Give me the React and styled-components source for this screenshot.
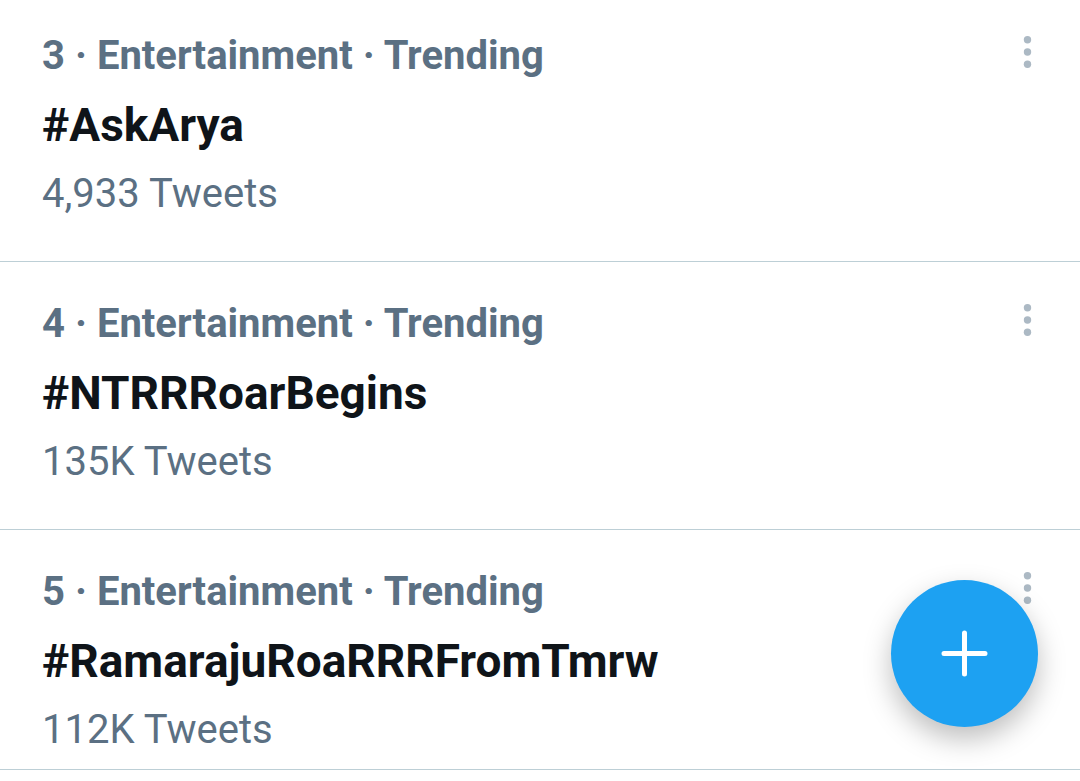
import React from 'react';
import styled, { createGlobalStyle } from 'styled-components';

const GlobalStyle = createGlobalStyle`
  * {
    box-sizing: border-box;
  }

  body {
    margin: 0;
    background: #ffffff;
    font-family: Roboto, sans-serif;
    overflow: hidden;
  }
`;

const List = styled.ul`
  margin: 0;
  padding: 0;
  list-style: none;
`;

const Row = styled.li`
  display: flex;
  justify-content: space-between;
  align-items: flex-start;
  padding: ${({ $first }) => ($first ? 28 : 34)}px 42px ${({ $last }) => ($last ? 11 : 39)}px;
  border-bottom: 1px solid #bdcfd6;
`;

const TrendLink = styled.a`
  display: flex;
  flex-direction: column;
  gap: 13px;
  color: inherit;
  text-decoration: none;
`;

const Meta = styled.span`
  font-size: 40px;
  font-weight: 700;
  line-height: 56px;
  color: #5b7083;
`;

const Title = styled.span`
  font-size: 46px;
  font-weight: 700;
  line-height: 56px;
  color: #0f1419;
`;

const Count = styled.span`
  font-size: 40px;
  line-height: 56px;
  color: #5b7083;
`;

const MoreButton = styled.button`
  display: flex;
  margin: 8px 6px 0 0;
  padding: 0;
  border: 0;
  background: none;
  color: #acb9c4;
`;

const ComposeButton = styled.button`
  position: fixed;
  right: 42px;
  bottom: 54px;
  display: flex;
  align-items: center;
  justify-content: center;
  width: 147px;
  height: 147px;
  padding: 0;
  border: 0;
  border-radius: 50%;
  background: #1da1f2;
  color: #ffffff;
  box-shadow: 0 12px 28px rgba(0, 0, 0, 0.26);
`;

const trends = [
  { rank: 3, title: '#AskArya', count: '4,933 Tweets' },
  { rank: 4, title: '#NTRRRoarBegins', count: '135K Tweets' },
  { rank: 5, title: '#RamarajuRoaRRRFromTmrw', count: '112K Tweets' },
];

const MoreIcon = () => (
  <svg width="9" height="32" viewBox="0 0 9 32" fill="currentColor" aria-hidden="true">
    <circle cx="4.5" cy="3.8" r="3.7" />
    <circle cx="4.5" cy="16" r="3.7" />
    <circle cx="4.5" cy="28.2" r="3.7" />
  </svg>
);

const PlusIcon = () => (
  <svg width="47" height="47" viewBox="0 0 47 47" fill="none" stroke="currentColor" strokeWidth="5" strokeLinecap="round" aria-hidden="true">
    <path d="M23.5 3v41M3 23.5h41" />
  </svg>
);

export default function App() {
  return (
    <>
      <GlobalStyle />
      <main>
        <List>
          {trends.map((trend, i) => (
            <Row key={trend.rank} $first={i === 0} $last={i === trends.length - 1}>
              <TrendLink href={trend.title}>
                <Meta>{trend.rank} · Entertainment · Trending</Meta>
                <Title>{trend.title}</Title>
                <Count>{trend.count}</Count>
              </TrendLink>
              <MoreButton type="button" aria-label="More">
                <MoreIcon />
              </MoreButton>
            </Row>
          ))}
        </List>
      </main>
      <ComposeButton type="button" aria-label="Compose">
        <PlusIcon />
      </ComposeButton>
    </>
  );
}
